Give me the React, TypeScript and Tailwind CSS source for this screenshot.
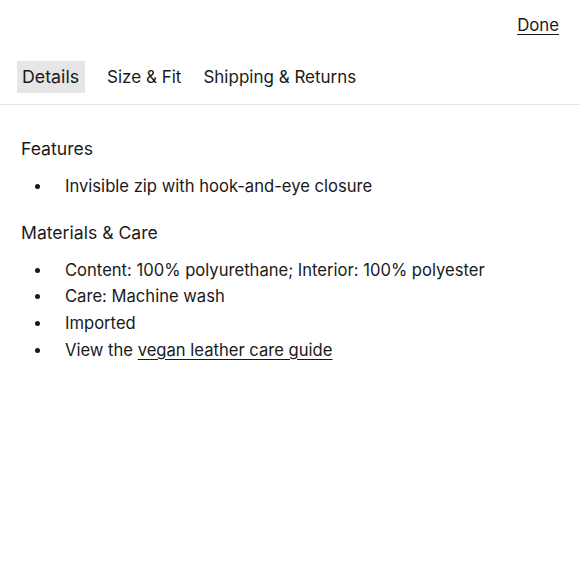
import React from "react";

function Dot() {
  return (
    <span className="w-[44px] flex items-center pl-[14px]">
      <span className="w-[5px] h-[5px] rounded-full bg-[#1a1a1a]" />
    </span>
  );
}

export default function App() {
  const f = { fontFamily: "Inter, 'Noto Sans', sans-serif" };
  return (
    <div className="w-[580px] h-[580px] bg-white text-[#1a1a1a] text-[16.6px]" style={f}>
      <div className="flex justify-end pt-[12px] pr-[21px] h-[61px]">
        <span className="underline underline-offset-[3px] leading-[26px] text-[16.8px]">Done</span>
      </div>
      <div className="flex items-center gap-[22px] pl-[17px] pb-[11px] border-b border-[#e3e3e3] text-[17px]">
        <span className="bg-[#e6e6e6] pl-[5px] pr-[6px] h-[32px] flex items-center pt-[1px] text-[17.8px]">Details</span>
        <span className="pt-[1px]">Size &amp; Fit</span>
        <span className="pt-[1px]">Shipping &amp; Returns</span>
      </div>
      <div className="pl-[21px] pt-[31px]">
        <h3 className="leading-[26px] text-[17.6px]">Features</h3>
        <ul className="mt-[11px] leading-[26.7px]">
          <li className="flex">
            <Dot />
            <span>Invisible zip with hook-and-eye closure</span>
          </li>
        </ul>
        <h3 className="mt-[20px] leading-[26px] text-[17.6px]">Materials &amp; Care</h3>
        <ul className="mt-[11px] leading-[26.7px]">
          <li className="flex"><Dot /><span>Content: 100% polyurethane; Interior: 100% polyester</span></li>
          <li className="flex"><Dot /><span>Care: Machine wash</span></li>
          <li className="flex"><Dot /><span>Imported</span></li>
          <li className="flex"><Dot /><span>View the <span className="underline underline-offset-[3px]">vegan leather care guide</span></span></li>
        </ul>
      </div>
    </div>
  );
}
